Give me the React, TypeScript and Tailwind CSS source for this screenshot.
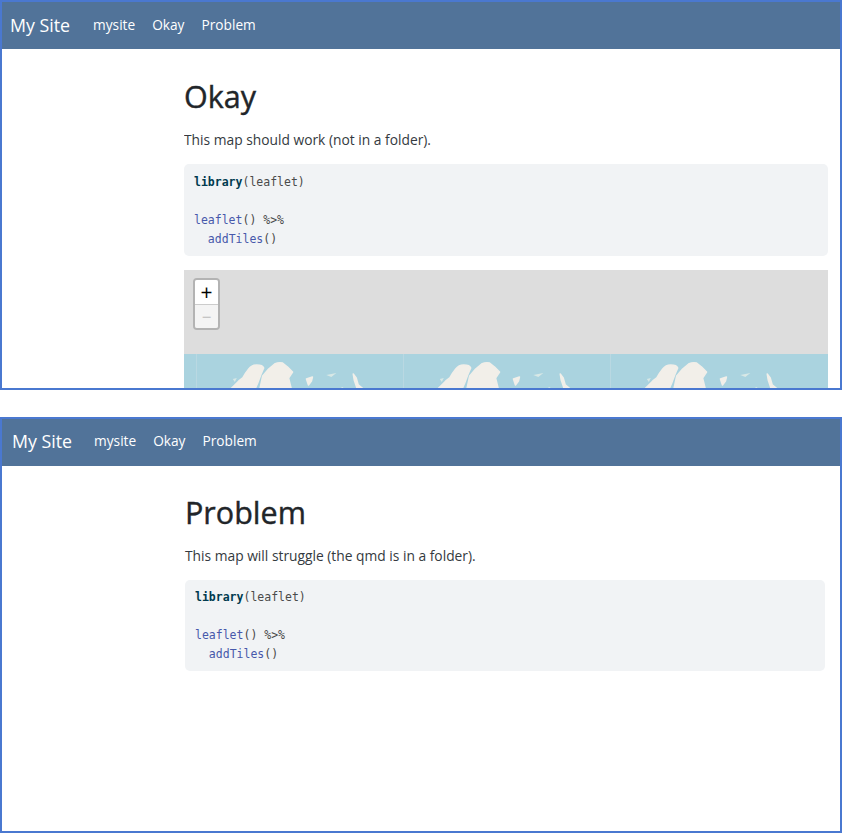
const sans = "font-['Open_Sans','Liberation_Sans',sans-serif]"

function Tile() {
  return (
    <svg width="207" height="36" viewBox="0 0 207 36" className="shrink-0 border-l border-[#b9d8e2]">
      <g fill="#f2efe9" stroke="#f2efe9" strokeWidth="1.5" strokeLinejoin="round">
        <path d="M33 36 L38 31 L42 27 L46 24 L49 19 L52 15 Q55 11 60 11 Q66 11 67 14 L64 21 L61 29 L58 36 Z" />
        <path d="M63 36 L66 22 L72 15 L78 10 Q82 8 86 9 L91 13 L96 18 L92 24 L95 36 Z" />
        <path d="M110 25 L116 23 L115 27 L112 31 L111 28 Z" />
        <path d="M157 20 L160 24 L162 31 L167 35 L161 35 L158 26 Z" />
      </g>
      <path d="M130 21 L140 19 L135 23 Z M146 33 L150 36 L142 36 Z M36 25 L40 24 L38 28 Z" fill="#d8e8e6" />
    </svg>
  )
}

function Code({ pad }: { pad: string }) {
  return (
    <pre className={`bg-[#f1f3f5] rounded-[5px] px-2.5 pb-[7px] font-['DejaVu_Sans_Mono',monospace] text-[11.5px] leading-[19px] text-[#4a4a4a] ${pad}`}>
      <span className="font-bold text-[#003b4f]">library</span>(leaflet){'\n\n'}
      <span className="text-[#4758ab]">leaflet</span>() %&gt;%{'\n  '}
      <span className="text-[#4758ab]">addTiles</span>()
    </pre>
  )
}

function Navbar({ pad, brandGap }: { pad: string; brandGap: string }) {
  return (
    <nav className={`flex h-[47px] shrink-0 items-center bg-[#517399] text-white ${pad}`}>
      <span className={`text-[17.8px] ${brandGap}`}>My Site</span>
      <div className="flex gap-[17px] text-[13.7px]">
        <span>mysite</span>
        <span>Okay</span>
        <span>Problem</span>
      </div>
    </nav>
  )
}

export default function App() {
  return (
    <div className={`${sans} flex h-[833px] w-[842px] flex-col justify-between overflow-hidden bg-white text-[#212529]`}>
      <section className="flex h-[390px] flex-col overflow-hidden border-2 border-[#4a78d0]">
        <Navbar pad="pl-2 pb-[1px]" brandGap="mr-[23px]" />
        <div className="ml-[182px] mr-[12px] min-h-0 flex-1 overflow-hidden">
          <h1 className="mt-[25px] text-[30.5px] leading-[44px] [-webkit-text-stroke:0.4px_#212529]">Okay</h1>
          <p className="mt-[12px] text-[13.8px] leading-[20px] text-[#343a40]">This map should work (not in a folder).</p>
          <div className="mt-[14px]">
            <Code pad="pt-[9px]" />
          </div>
          <div className="relative mt-[14px] h-[120px] bg-[#dddddd]">
            <div className="absolute left-[9px] top-[8px] z-10 flex h-[52px] w-[27px] flex-col overflow-hidden rounded-[4px] border-2 border-[#b3b3b3]">
              <div className="flex h-[25px] items-center justify-center border-b border-[#cccccc] bg-white text-[21px] font-medium leading-none text-black">+</div>
              <div className="flex flex-1 items-center justify-center bg-[#f4f4f4] text-[17px] leading-none text-[#bbbbbb]">−</div>
            </div>
            <div className="absolute inset-x-0 top-[84px] flex h-[36px] overflow-hidden bg-[#aad3df] pl-[12px]">
              <Tile />
              <Tile />
              <Tile />
            </div>
          </div>
        </div>
      </section>

      <section className="flex h-[416px] flex-col overflow-hidden border-2 border-[#4a78d0]">
        <Navbar pad="pl-2.5 pb-[2px]" brandGap="mr-[22px]" />
        <div className="ml-[183px] mr-[15px]">
          <h1 className="mt-[24px] text-[30.5px] leading-[44px] [-webkit-text-stroke:0.4px_#212529]">Problem</h1>
          <p className="mt-[12px] text-[13.8px] leading-[20px] text-[#343a40]">This map will struggle (the qmd is in a folder).</p>
          <div className="mt-[14px]">
            <Code pad="pt-[8px]" />
          </div>
        </div>
      </section>
    </div>
  )
}
